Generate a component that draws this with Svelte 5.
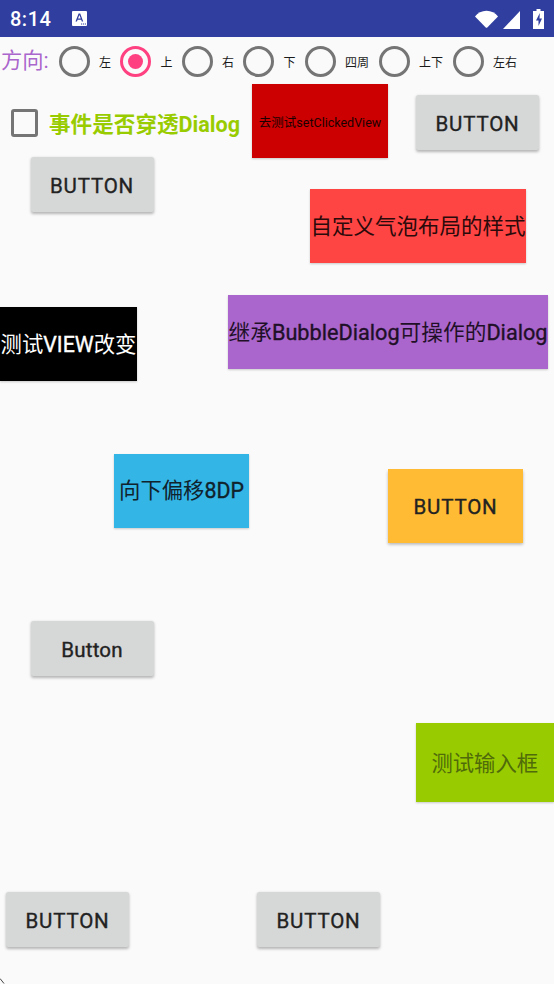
<script>
  const dirs = [
    { label: '左', on: false, wide: false },
    { label: '上', on: true, wide: false },
    { label: '右', on: false, wide: false },
    { label: '下', on: false, wide: false },
    { label: '四周', on: false, wide: true },
    { label: '上下', on: false, wide: true },
    { label: '左右', on: false, wide: true }
  ];
</script>

<div class="screen">
  <header class="status">
    <div class="status-left">
      <span class="time">8:14</span>
      <svg class="a-icon" width="15" height="15" viewBox="0 0 15 15">
        <rect width="15" height="15" rx="1" fill="#fff" />
        <path d="M3.500 10.500 6.600 2.500h1.600l3 8H9.800l-.6-1.800H5.600L5 10.500zM6 7.500h2.800L7.400 3.900z" fill="#303f9f" />
        <path d="M9 12.500h1.200v1H9zM11 12.500h1.200v1H11zM13 12.500h1v1h-1z" fill="#303f9f" />
      </svg>
    </div>
    <div class="status-right">
      <svg class="wifi" width="23" height="18" viewBox="0 0 23 18"><path d="M0 6.500C2.800 3 6.800 .8 11.500 .8S20.200 3 23 6.500L12.500 17.300a1.400 1.400 0 0 1-2 0z" fill="#fff" /></svg>
      <svg class="signal" width="17" height="18" viewBox="0 0 17 18"><path d="M17 0v18H0z" fill="#fff" /></svg>
      <svg class="battery" width="11" height="20" viewBox="0 0 11 20"><path d="M3.500 0h4v2H11v18H0V2h3.500z" fill="#fff" /><path d="M6.800 4 3 11.500h2.500V17L9 9.500H6.500z" fill="#303f9f" /></svg>
    </div>
  </header>

  <section class="radios">
    <span class="dir">方向:</span>
    {#each dirs as d}
      <span class="radio-item" class:wide={d.wide}>
        <span class="radio" class:on={d.on}></span>
        <span class="radio-label">{d.label}</span>
      </span>
    {/each}
  </section>

  <section class="band band-a">
    <div class="col-left">
      <div class="check-row">
        <span class="check"></span>
        <span class="check-label">事件是否穿透Dialog</span>
      </div>
      <button class="btn btn-a">BUTTON</button>
    </div>
    <div class="col-right">
      <div class="top-pair">
        <div class="block red">去测试setClickedView</div>
        <button class="btn btn-b">BUTTON</button>
      </div>
      <div class="block coral">自定义气泡布局的样式</div>
    </div>
  </section>

  <section class="band band-b">
    <div class="block black"><span>测试<b>VIEW</b>改变</span></div>
    <div class="block purple"><span>继承<b>BubbleDialog</b>可操作的<b>Dialog</b></span></div>
  </section>

  <section class="band band-c">
    <div class="block blue"><span>向下偏移<b>8DP</b></span></div>
    <button class="btn orange">BUTTON</button>
  </section>

  <section class="band band-d">
    <button class="btn btn-c">Button</button>
  </section>

  <section class="band band-e">
    <div class="block lime">测试输入框</div>
  </section>

  <section class="band band-f">
    <button class="btn btn-d">BUTTON</button>
    <button class="btn btn-e">BUTTON</button>
  </section>

  <svg class="corner" width="5" height="6" viewBox="0 0 5 6"><path d="M0 .5 4 5.500" stroke="#444" stroke-width="1" fill="none" /></svg>
</div>

<style>
  :global(body) {
    margin: 0;
    background: #fafafa;
  }
  .screen {
    position: relative;
    width: 554px;
    height: 984px;
    overflow: hidden;
    background: #fafafa;
    font-family: Roboto, "Noto Sans CJK SC", sans-serif;
    color: #1a1a1a;
  }
  .corner {
    position: absolute;
    left: 0;
    bottom: 0;
  }
  .status {
    height: 37px;
    background: #303f9f;
    display: flex;
    align-items: center;
    justify-content: space-between;
    padding: 0 10px;
    box-sizing: border-box;
    color: #fff;
  }
  .status-left {
    display: flex;
    align-items: center;
    gap: 21px;
  }
  .time {
    font-size: 20px;
    font-weight: 500;
    letter-spacing: 0.5px;
  }
  .status-right {
    display: flex;
    align-items: center;
  }
  .signal {
    margin-left: 5px;
    margin-top: 2px;
  }
  .battery {
    margin-left: 13px;
  }
  .radios {
    height: 47px;
    display: flex;
    align-items: center;
    padding-left: 1px;
  }
  .dir {
    font-size: 21.300px;
    color: #aa66cc;
    width: 58px;
    line-height: 24px;
    margin-top: 1px;
    white-space: nowrap;
  }
  .radio-item {
    display: flex;
    align-items: center;
    width: 61.500px;
    flex: none;
  }
  .radio-item.wide {
    width: 74px;
  }
  .radio {
    width: 31px;
    height: 31px;
    border: 3px solid #757575;
    border-radius: 50%;
    box-sizing: border-box;
    position: relative;
    flex: none;
    margin-top: 1px;
    margin-left: -0.500px;
  }
  .radio.on {
    border-color: #ff4081;
  }
  .radio.on::after {
    content: "";
    position: absolute;
    inset: 5px;
    border-radius: 50%;
    background: #ff4081;
  }
  .radio-label {
    font-size: 12px;
    margin-left: 9.500px;
    white-space: nowrap;
    margin-top: 2px;
  }
  .band {
    display: flex;
    align-items: flex-start;
  }
  .btn {
    border: none;
    border-radius: 2.500px;
    background: #d6d7d7;
    box-shadow: 0 1.500px 3px rgba(0, 0, 0, 0.28);
    font-family: Roboto, sans-serif;
    font-size: 20.500px;
    font-weight: 400;
    -webkit-text-stroke: 0.35px currentColor;
    color: #222;
    letter-spacing: 0.8px;
    padding: 2px 0 0;
    width: 123px;
    height: 55px;
    flex: none;
  }
  .block {
    display: flex;
    align-items: center;
    justify-content: center;
    flex: none;
    box-shadow: 0 1px 2px rgba(0, 0, 0, 0.2);
    white-space: nowrap;
    overflow: hidden;
    box-sizing: border-box;
    font-size: 21.330px;
    padding-bottom: 4px;
  }
  .block b {
    font-weight: 400;
    -webkit-text-stroke: 0.35px currentColor;
  }
  .band-a {
    height: 179px;
  }
  .col-left {
    width: 252px;
    flex: none;
    display: flex;
    flex-direction: column;
    align-items: flex-start;
  }
  .check-row {
    display: flex;
    align-items: center;
    height: 73px;
    padding-left: 11px;
  }
  .check {
    width: 27px;
    height: 28px;
    border: 3px solid #757575;
    border-radius: 3px;
    box-sizing: border-box;
    flex: none;
    margin-top: 4px;
  }
  .check-label {
    font-size: 21.600px;
    font-weight: 700;
    color: #99cc00;
    margin-left: 11px;
    margin-top: 3px;
    white-space: nowrap;
  }
  .btn-a {
    margin-left: 30.500px;
  }
  .col-right {
    display: flex;
    flex-direction: column;
    align-items: flex-start;
  }
  .top-pair {
    display: flex;
    align-items: flex-start;
  }
  .red {
    width: 136px;
    height: 74px;
    background: #cc0000;
    font-size: 12.500px;
    color: #1a0000;
    padding-bottom: 0;
  }
  .btn-b {
    margin-left: 28px;
    margin-top: 11px;
  }
  .coral {
    width: 216px;
    height: 74px;
    margin-left: 58px;
    margin-top: 31px;
    background: #ff4444;
    font-size: 21.500px;
    color: #2a0a0a;
  }
  .band-b {
    margin-top: 32px;
    height: 86px;
  }
  .black {
    width: 137px;
    height: 74px;
    margin-top: 12px;
    background: #000;
    color: #fff;
  }
  .purple {
    width: 320px;
    height: 74px;
    margin-left: 91px;
    background: #aa66cc;
    color: #1f1028;
    font-size: 21.700px;
  }
  .band-c {
    margin-top: 73px;
    height: 89px;
  }
  .blue {
    width: 135px;
    height: 74px;
    margin-left: 114px;
    background: #33b5e5;
    color: #10222c;
    padding-bottom: 6px;
  }
  .orange {
    width: 135px;
    height: 74px;
    margin-left: 139px;
    margin-top: 15px;
    background: #ffbb33;
    border-radius: 0;
    padding-top: 1px;
  }
  .band-d {
    margin-top: 78px;
    height: 56px;
  }
  .btn-c {
    margin-left: 30.500px;
    letter-spacing: 0.2px;
  }
  .band-e {
    margin-top: 46px;
    height: 79px;
    justify-content: flex-end;
  }
  .lime {
    width: 138.500px;
    height: 79px;
    background: #99cc00;
    color: #4f6b0a;
    padding-bottom: 2px;
  }
  .band-f {
    margin-top: 90px;
  }
  .btn-d {
    margin-left: 6px;
  }
  .btn-e {
    margin-left: 128px;
  }
</style>
